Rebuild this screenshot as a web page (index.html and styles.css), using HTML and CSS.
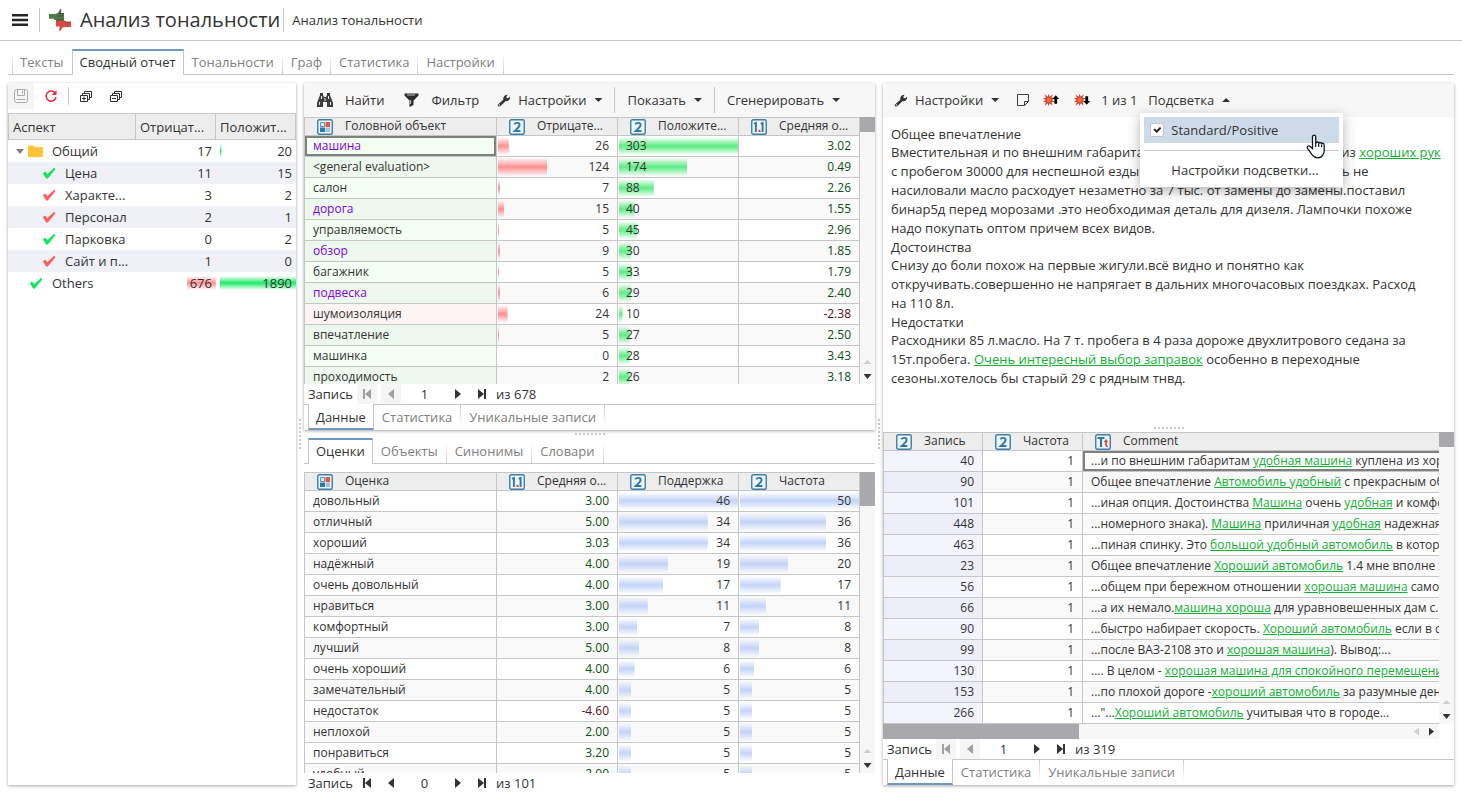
FILE: index.html
```html
<!DOCTYPE html>
<html lang="ru">
<head>
<meta charset="utf-8">
<title>Анализ тональности</title>
<link rel="stylesheet" href="styles.css">
</head>
<body>
<svg class="defs" aria-hidden="true">
  <symbol id="i-int" viewBox="0 0 16 16"><rect x=".75" y=".75" width="14.5" height="14.5" rx="1.5" fill="#eef4f8" stroke="#3c7fa8" stroke-width="1.4"/><path d="M5.200 5.300C6.500 3.500 10.600 3.200 10.600 6c0 2-2.600 3.700-4.900 6h5.700" fill="none" stroke="#2f77a5" stroke-width="1.900"/></symbol>
  <symbol id="i-real" viewBox="0 0 16 16"><rect x=".75" y=".75" width="14.5" height="14.5" rx="1.5" fill="#eef4f8" stroke="#3c7fa8" stroke-width="1.4"/><path d="M3 4.800 4.900 3.900V13M9.700 4.800l1.900-.9V13" fill="none" stroke="#2f77a5" stroke-width="1.900"/><path d="M7.500 10.800h2v2.200h-2z" fill="#e04438"/></symbol>
  <symbol id="i-cat" viewBox="0 0 16 16"><rect x=".75" y=".75" width="14.5" height="14.5" rx="1.5" fill="#eef4f8" stroke="#3c7fa8" stroke-width="1.4"/><path d="M3.500 3.500h4v4h-4z" fill="#dcebf5" stroke="#5b93b8"/><path d="M8.500 3H13v5H8.500z" fill="#e25549"/><path d="M3 8.500h5V13H3z" fill="#2f77a5"/><path d="M8.500 8.500H13V13H8.500z" fill="#a5c3d8"/></symbol>
  <symbol id="i-text" viewBox="0 0 16 16"><rect x=".75" y=".75" width="14.5" height="14.5" rx="1.5" fill="#eef4f8" stroke="#3c7fa8" stroke-width="1.4"/><path d="M2.500 4h7M6 4v9" fill="none" stroke="#2f77a5" stroke-width="2.200"/><path d="M11 5.500v6q0 1 1.800 1M9.200 7.500h3.600" fill="none" stroke="#e04438" stroke-width="1.600"/></symbol>
  <symbol id="i-wrench" viewBox="0 0 14 14"><path d="M1 11.400 6.300 6.700C5.800 4.200 7.600 1.600 10.600 1.700L9.300 3.700l.5 1.400 1.500.2L13 3.500c.6 2.800-1.700 5-4.300 4.600L3.500 13.100C2 14-.1 12.700 1 11.400z" fill="#333"/><circle cx="2.400" cy="11.900" r=".7" fill="#f7f7f7"/></symbol>
  <symbol id="i-check" viewBox="0 0 14 12"><path d="M.8 6.300 3.200 4.500 5.300 7.200 12.200.8 13.400 2.200 5.800 11.400 4.200 11.400z" fill="currentColor"/></symbol>
  <symbol id="i-first" viewBox="0 0 12 12"><path d="M2 1h2v10H2zM4 6l6-5v10z" fill="currentColor"/></symbol>
  <symbol id="i-prev" viewBox="0 0 12 12"><path d="M3 6l6-5v10z" fill="currentColor"/></symbol>
  <symbol id="i-next" viewBox="0 0 12 12"><path d="M9 6 3 1v10z" fill="currentColor"/></symbol>
  <symbol id="i-last" viewBox="0 0 12 12"><path d="M8 1h2v10H8zM8 6 2 1v10z" fill="currentColor"/></symbol>
  <symbol id="i-burst" viewBox="0 0 18 14"><path d="M6 0l1 3.500L10.500 1 9 4.500l3.500.5L9.500 7l3 2.500-3.500-.3 1.200 3.800L7 10.500 6 14l-1-3.500L1.800 13 3 9.200l-3 .3L2.600 7 0 4.800l3.200-.2L1.500 1 5 3.500z" fill="#c94a32"/><circle cx="6.200" cy="7" r="2.300" fill="#ff6a35"/></symbol>
</svg>

<header class="header">
  <button class="icon-btn burger" aria-label="Меню"><svg width="16" height="12"><path d="M0 0h16v2.500H0zM0 4.800h16v2.500H0zM0 9.500h16V12H0z" fill="#262626"/></svg></button>
  <svg class="logo" width="22" height="22" viewBox="0 0 22 22"><path d="M0 5h6l3-1 2-4 1.500.5L12 4h3v6.500L10.500 12 5 9.800H0z" fill="#4d7c4b"/><path d="M5 9.800 10.500 12 15 10.500" fill="none" stroke="#31522f"/><path d="M22 18h-6l-2.500.5-2 3.500-1.500-.5.800-4H7V12l4.500-1.500L17 13h5z" fill="#d9493f"/><path d="M7 12l4.500-1.500L17 13h5M9 4.500h6M8 7h6" fill="none" stroke="#4b4038" stroke-width=".8"/></svg>
  <h1 class="title">Анализ тональности</h1>
  <span class="crumb">Анализ тональности</span>
</header>

<nav class="tabs main-tabs">
  <button class="tab first">Тексты</button><button class="tab active">Сводный отчет</button><button class="tab">Тональности</button><button class="tab">Граф</button><button class="tab">Статистика</button><button class="tab">Настройки</button>
</nav>

<main class="workspace">
  <section class="panel aspects">
    <div class="aspect-tools">
      <button class="tool saved" aria-label="Сохранить"><svg width="14" height="14" viewBox="0 0 14 14" fill="none" stroke="#aaa"><rect x=".5" y=".5" width="13" height="13" rx="2"/><path d="M3.500.5v6h7v-6M8.500 2v2.500M2.500 10.500h9"/></svg></button>
      <button class="tool" aria-label="Обновить"><svg width="14" height="14" viewBox="0 0 14 14"><path d="M10.800 3.700A5 5 0 1 0 12 8.300" fill="none" stroke="#f5222d" stroke-width="1.500"/><path d="M12.500 1v5H7.800z" fill="#f5222d"/></svg></button>
      <span class="rule"></span>
      <button class="tool" aria-label="Развернуть все"><svg width="12" height="11" viewBox="0 0 12 11" fill="none" stroke="#333"><path d="M4.500 2V.5h7v6H10M2.500 4V2.500h7v6H8"/><path d="M.5 4.500h7v6h-7zM2 7.500h4M4 5.500v4"/></svg></button>
      <button class="tool" aria-label="Свернуть все"><svg width="12" height="11" viewBox="0 0 12 11" fill="none" stroke="#333"><path d="M4.500 2V.5h7v6H10M2.500 4V2.500h7v6H8"/><path d="M.5 4.500h7v6h-7zM2 7.500h4"/></svg></button>
    </div>
    <table class="tree">
      <colgroup><col><col class="c-neg"><col class="c-pos"></colgroup>
      <thead><tr><th>Аспект</th><th>Отрицат...</th><th>Положит...</th></tr></thead>
      <tbody>
        <tr><td class="root"><svg class="twist" width="8" height="5"><path d="M0 0h8L4 5z" fill="#808080"/></svg><svg class="folder" width="15" height="12"><path d="M0 1.500Q0 .5 1 .5h4.500L7 2h7q1 0 1 1v8q0 1-1 1H1q-1 0-1-1z" fill="#ffc436"/></svg>Общий</td><td>17</td><td class="tbar green" style="--v:2%">20</td></tr>
        <tr><td class="leaf"><svg class="ok" width="14" height="12"><use href="#i-check"/></svg>Цена</td><td>11</td><td>15</td></tr>
        <tr><td class="leaf"><svg class="bad" width="14" height="12"><use href="#i-check"/></svg>Характе...</td><td>3</td><td>2</td></tr>
        <tr><td class="leaf"><svg class="bad" width="14" height="12"><use href="#i-check"/></svg>Персонал</td><td>2</td><td>1</td></tr>
        <tr><td class="leaf"><svg class="ok" width="14" height="12"><use href="#i-check"/></svg>Парковка</td><td>0</td><td>2</td></tr>
        <tr><td class="leaf"><svg class="bad" width="14" height="12"><use href="#i-check"/></svg>Сайт и п...</td><td>1</td><td>0</td></tr>
        <tr><td class="other"><svg class="ok" width="14" height="12"><use href="#i-check"/></svg>Others</td><td class="tbar red" style="--v:36%">676</td><td class="tbar green" style="--v:100%">1890</td></tr>
      </tbody>
    </table>
  </section>

  <div class="split-v"><i class="grip"></i></div>

  <div class="middle">
    <section class="panel objects">
      <div class="toolbar">
        <button class="cmd wide"><svg width="16" height="14" viewBox="0 0 16 14"><path d="M3 0h3v2l1 2h2l1-2V0h3v2l3 8v4h-6V9H6v5H0v-4l3-8z" fill="#3c3c3c"/><path d="M4.500 3v3M11.500 3v3M2.500 9v3M13.500 9v3M8 5v3" stroke="#eee"/></svg>Найти</button>
        <button class="cmd wide"><svg width="15" height="14" viewBox="0 0 15 14"><path d="M.5.500h14v2L9.500 7.500V12l-4 2V7.500L.5 2.500z" fill="#2b2b2b"/><path d="M3 2h8M6.500 7v4" stroke="#bbb" stroke-width="1.200"/></svg>Фильтр</button>
        <button class="cmd"><svg width="14" height="14"><use href="#i-wrench"/></svg>Настройки<i class="caret"></i></button>
        <span class="rule"></span>
        <button class="cmd">Показать<i class="caret"></i></button>
        <span class="rule"></span>
        <button class="cmd">Сгенерировать<i class="caret"></i></button>
      </div>
      <div class="grid-area">
        <div class="grid-clip">
        <table class="grid heads">
          <colgroup><col><col class="c-num"><col class="c-num"><col class="c-num"></colgroup>
          <thead><tr><th><div><svg><use href="#i-cat"/></svg><span>Головной объект</span></div></th><th><div><svg><use href="#i-int"/></svg><span>Отрицате...</span></div></th><th><div><svg><use href="#i-int"/></svg><span>Положите...</span></div></th><th><div><svg><use href="#i-real"/></svg><span>Средняя о...</span></div></th></tr></thead>
          <tbody>
            <tr><td class="picked"><a href="#">машина</a></td><td class="bar red" style="--v:9%">26</td><td class="bar green" style="--v:100%">303</td><td class="up">3.02</td></tr>
            <tr><td>&lt;general evaluation&gt;</td><td class="bar red" style="--v:41%">124</td><td class="bar green" style="--v:57%">174</td><td class="up">0.49</td></tr>
            <tr><td>салон</td><td class="bar red" style="--v:2%">7</td><td class="bar green" style="--v:29%">88</td><td class="up">2.26</td></tr>
            <tr><td><a href="#">дорога</a></td><td class="bar red" style="--v:5%">15</td><td class="bar green" style="--v:13%">40</td><td class="up">1.55</td></tr>
            <tr><td>управляемость</td><td class="bar red" style="--v:1%">5</td><td class="bar green" style="--v:15%">45</td><td class="up">2.96</td></tr>
            <tr><td><a href="#">обзор</a></td><td class="bar red" style="--v:2%">9</td><td class="bar green" style="--v:10%">30</td><td class="up">1.85</td></tr>
            <tr><td>багажник</td><td class="bar red" style="--v:1%">5</td><td class="bar green" style="--v:11%">33</td><td class="up">1.79</td></tr>
            <tr><td><a href="#">подвеска</a></td><td class="bar red" style="--v:2%">6</td><td class="bar green" style="--v:10%">29</td><td class="up">2.40</td></tr>
            <tr><td class="negative">шумоизоляция</td><td class="bar red" style="--v:8%">24</td><td class="bar green" style="--v:3%">10</td><td class="down">-2.38</td></tr>
            <tr><td>впечатление</td><td class="bar red" style="--v:1%">5</td><td class="bar green" style="--v:9%">27</td><td class="up">2.50</td></tr>
            <tr><td>машинка</td><td>0</td><td class="bar green" style="--v:9%">28</td><td class="up">3.43</td></tr>
            <tr><td>проходимость</td><td>2</td><td class="bar green" style="--v:9%">26</td><td class="up">3.18</td></tr>
          </tbody>
        </table>
        </div>
        <div class="vscroll"><i class="thumb small"></i><i class="arr up-off"></i><i class="arr dn"></i></div>
      </div>
      <div class="pager">
        <label for="p1">Запись</label>
        <button disabled aria-label="В начало"><svg><use href="#i-first"/></svg></button><button disabled aria-label="Назад"><svg><use href="#i-prev"/></svg></button>
        <input id="p1" type="text" value="1">
        <button aria-label="Вперед"><svg><use href="#i-next"/></svg></button><button aria-label="В конец"><svg><use href="#i-last"/></svg></button>
        <span>из 678</span>
      </div>
      <nav class="tabs under"><button class="tab active">Данные</button><button class="tab">Статистика</button><button class="tab">Уникальные записи</button></nav>
    </section>

    <div class="split-h"><i class="grip"></i></div>

    <section class="ratings">
      <nav class="tabs"><button class="tab active">Оценки</button><button class="tab">Объекты</button><button class="tab">Синонимы</button><button class="tab">Словари</button></nav>
      <div class="grid-area">
        <div class="grid-clip">
        <table class="grid">
          <colgroup><col><col class="c-num"><col class="c-num"><col class="c-num"></colgroup>
          <thead><tr><th><div><svg><use href="#i-cat"/></svg><span>Оценка</span></div></th><th><div><svg><use href="#i-real"/></svg><span>Средняя о...</span></div></th><th><div><svg><use href="#i-int"/></svg><span>Поддержка</span></div></th><th><div><svg><use href="#i-int"/></svg><span>Частота</span></div></th></tr></thead>
          <tbody>
            <tr><td>довольный</td><td class="up">3.00</td><td class="bar blue" style="--v:100%">46</td><td class="bar blue" style="--v:100%">50</td></tr>
            <tr><td>отличный</td><td class="up">5.00</td><td class="bar blue" style="--v:74%">34</td><td class="bar blue" style="--v:72%">36</td></tr>
            <tr><td>хороший</td><td class="up">3.03</td><td class="bar blue" style="--v:74%">34</td><td class="bar blue" style="--v:72%">36</td></tr>
            <tr><td>надёжный</td><td class="up">4.00</td><td class="bar blue" style="--v:41%">19</td><td class="bar blue" style="--v:40%">20</td></tr>
            <tr><td>очень довольный</td><td class="up">4.00</td><td class="bar blue" style="--v:37%">17</td><td class="bar blue" style="--v:34%">17</td></tr>
            <tr><td>нравиться</td><td class="up">3.00</td><td class="bar blue" style="--v:24%">11</td><td class="bar blue" style="--v:22%">11</td></tr>
            <tr><td>комфортный</td><td class="up">3.00</td><td class="bar blue" style="--v:15%">7</td><td class="bar blue" style="--v:16%">8</td></tr>
            <tr><td>лучший</td><td class="up">5.00</td><td class="bar blue" style="--v:17%">8</td><td class="bar blue" style="--v:16%">8</td></tr>
            <tr><td>очень хороший</td><td class="up">4.00</td><td class="bar blue" style="--v:13%">6</td><td class="bar blue" style="--v:12%">6</td></tr>
            <tr><td>замечательный</td><td class="up">4.00</td><td class="bar blue" style="--v:10%">5</td><td class="bar blue" style="--v:10%">5</td></tr>
            <tr><td>недостаток</td><td class="down">-4.60</td><td class="bar blue" style="--v:10%">5</td><td class="bar blue" style="--v:10%">5</td></tr>
            <tr><td>неплохой</td><td class="up">2.00</td><td class="bar blue" style="--v:10%">5</td><td class="bar blue" style="--v:10%">5</td></tr>
            <tr><td>понравиться</td><td class="up">3.20</td><td class="bar blue" style="--v:10%">5</td><td class="bar blue" style="--v:10%">5</td></tr>
            <tr><td>удобный</td><td class="up">2.00</td><td class="bar blue" style="--v:10%">5</td><td class="bar blue" style="--v:10%">5</td></tr>
          </tbody>
        </table>
        </div>
        <div class="vscroll"><i class="thumb tall"></i><i class="arr up-off"></i><i class="arr dn"></i></div>
      </div>
      <div class="pager">
        <label for="p2">Запись</label>
        <button aria-label="В начало"><svg><use href="#i-first"/></svg></button><button aria-label="Назад"><svg><use href="#i-prev"/></svg></button>
        <input id="p2" type="text" value="0">
        <button aria-label="Вперед"><svg><use href="#i-next"/></svg></button><button aria-label="В конец"><svg><use href="#i-last"/></svg></button>
        <span>из 101</span>
      </div>
    </section>
  </div>

  <div class="split-v"><i class="grip"></i></div>

  <section class="panel texts">
    <div class="review">
      <div class="toolbar">
        <button class="cmd"><svg width="14" height="14"><use href="#i-wrench"/></svg>Настройки<i class="caret"></i></button>
        <button class="icon-btn note" aria-label="Заметка"><svg width="12" height="12" viewBox="0 0 12 12" fill="none" stroke="#3c3c3c"><path d="M.5.500h11v7l-4 4h-7zM11.500 7.500h-4v4"/></svg></button>
        <button class="icon-btn" aria-label="Предыдущее"><svg width="17" height="14" viewBox="0 0 18 14"><use href="#i-burst" width="18" height="14"/><path d="M13.500 2l3.500 4h-2v5h-3V6h-2z"/></svg></button>
        <button class="icon-btn" aria-label="Следующее"><svg width="17" height="14" viewBox="0 0 18 14"><use href="#i-burst" width="18" height="14"/><path d="M13.500 12l3.500-4h-2V3h-3v5h-2z"/></svg></button>
        <span class="count">1 из 1</span>
        <div class="dropdown">
          <button class="cmd">Подсветка<i class="caret open"></i></button>
          <div class="menu">
            <label class="menu-item hover"><input type="checkbox" checked>Standard/Positive</label>
            <hr>
            <button class="menu-item">Настройки подсветки...</button>
            <svg class="pointer" width="20" height="25" viewBox="0 0 20 25"><path d="M6.500 14.500V3q0-1.800 1.600-1.800T9.700 3v6.500q0-1.500 1.500-1.500t1.500 1.700q0-1.200 1.400-1.200t1.500 1.700q0-1 1.200-1T18.200 11v5.500q0 3-1.500 4.500-1.300 2.800-5.200 2.800-3.500 0-5.500-3.300L1.500 14.300q-.8-1.600.6-2.300 1.200-.4 2.400.8z" fill="#fff" stroke="#111827" stroke-width="1.300"/><path d="M9.700 9v4M12.700 9.700V13M15.600 10.500V13" stroke="#111827" stroke-width="1.200"/></svg>
          </div>
        </div>
      </div>
      <article class="body">
        <h2>Общее впечатление</h2>
        <p>Вместительная и по внешним габаритам удобная машина куплена не из <a href="#">хороших рук</a><br>с пробегом 30000 для неспешной езды .Надеюсь прежний хозяин здесь не<br>насиловали масло расходует незаметно за 7 тыс. от замены до замены.поставил<br>бинар5д перед морозами .это необходимая деталь для дизеля. Лампочки похоже<br>надо покупать оптом причем всех видов.</p>
        <h2>Достоинства</h2>
        <p>Снизу до боли похож на первые жигули.всё видно и понятно как<br>откручивать.совершенно не напрягает в дальних многочасовых поездках. Расход<br>на 110 8л.</p>
        <h2>Недостатки</h2>
        <p>Расходники 85 л.масло. На 7 т. пробега в 4 раза дороже двухлитрового седана за<br>15т.пробега. <a href="#">Очень интересный выбор заправок</a> особенно в переходные<br>сезоны.хотелось бы старый 29 с рядным тнвд.</p>
      </article>
    </div>
    <div class="split-h"><i class="grip"></i></div>
    <div class="records">
      <div class="grid-area">
        <div class="grid-clip">
        <table class="grid comments">
          <colgroup><col class="c-rec"><col class="c-rec"><col></colgroup>
          <thead><tr><th><div><svg><use href="#i-int"/></svg><span>Запись</span></div></th><th><div><svg><use href="#i-int"/></svg><span>Частота</span></div></th><th><div><svg><use href="#i-text"/></svg><span>Comment</span></div></th></tr></thead>
          <tbody>
            <tr><td>40</td><td>1</td><td class="picked">...и по внешним габаритам <a href="#">удобная машина</a> куплена из хороших рук</td></tr>
            <tr><td>90</td><td>1</td><td>Общее впечатление <a href="#">Автомобиль удобный</a> с прекрасным обзором</td></tr>
            <tr><td>101</td><td>1</td><td>...иная опция. Достоинства <a href="#">Машина</a> очень <a href="#">удобная</a> и комфортная</td></tr>
            <tr><td>448</td><td>1</td><td>...номерного знака). <a href="#">Машина</a> приличная <a href="#">удобная</a> надежная</td></tr>
            <tr><td>463</td><td>1</td><td>...пиная спинку. Это <a href="#">большой удобный автомобиль</a> в котором</td></tr>
            <tr><td>23</td><td>1</td><td>Общее впечатление <a href="#">Хороший автомобиль</a> 1.4 мне вполне хватает</td></tr>
            <tr><td>56</td><td>1</td><td>...общем при бережном отношении <a href="#">хорошая машина</a> самое то</td></tr>
            <tr><td>66</td><td>1</td><td>...а их немало.<a href="#">машина хороша</a> для уравновешенных дам с...</td></tr>
            <tr><td>90</td><td>1</td><td>...быстро набирает скорость. <a href="#">Хороший автомобиль</a> если в семье</td></tr>
            <tr><td>99</td><td>1</td><td>...после ВАЗ-2108 это и <a href="#">хорошая машина</a>). Вывод:...</td></tr>
            <tr><td>130</td><td>1</td><td>.... В целом - <a href="#">хорошая машина для спокойного перемещения</a></td></tr>
            <tr><td>153</td><td>1</td><td>...по плохой дороге -<a href="#">хороший автомобиль</a> за разумные деньги</td></tr>
            <tr><td>266</td><td>1</td><td>..."...<a href="#">Хороший автомобиль</a> учитывая что в городе...</td></tr>
          </tbody>
        </table>
        </div>
        <div class="vscroll"><i class="thumb small"></i><i class="arr up-off"></i><i class="arr dn"></i></div>
      </div>
      <div class="hscroll"><i class="hthumb"></i><i class="arr lf"></i><i class="arr rt"></i></div>
      <div class="pager">
        <label for="p3">Запись</label>
        <button disabled aria-label="В начало"><svg><use href="#i-first"/></svg></button><button disabled aria-label="Назад"><svg><use href="#i-prev"/></svg></button>
        <input id="p3" type="text" value="1">
        <button aria-label="Вперед"><svg><use href="#i-next"/></svg></button><button aria-label="В конец"><svg><use href="#i-last"/></svg></button>
        <span>из 319</span>
      </div>
      <nav class="tabs under"><button class="tab active">Данные</button><button class="tab">Статистика</button><button class="tab">Уникальные записи</button></nav>
    </div>
  </section>
</main>
</body>
</html>
```
FILE: styles.css
```css
* { box-sizing: border-box; }

:root {
  --line: #c6c6c6;
  --accent: #7096c4;
  --text: #333;
  --muted: #808080;
}

body {
  margin: 0;
  height: 100vh;
  overflow: hidden;
  display: flex;
  flex-direction: column;
  background: #fff;
  color: var(--text);
  font: 13px/20px "Open Sans", sans-serif;
}

button, input { font: inherit; color: inherit; }
button { border: 0; padding: 0; background: none; white-space: nowrap; }
h1, h2, p { margin: 0; font-weight: 400; }
svg { flex: none; }
.defs { position: absolute; width: 0; height: 0; }

/* Header */
.header {
  display: flex;
  align-items: center;
  height: 41px;
  padding-left: 12px;
  border-bottom: 1px solid var(--line);
}
.icon-btn { display: flex; align-items: center; }
.burger { padding-right: 11px; height: 24px; border-right: 1px solid var(--line); }
.logo { margin: 0 9px; }
.title {
  padding-right: 3px;
  border-right: 1px solid var(--line);
  font-size: 20px;
  line-height: 24px;
}
.crumb { padding-left: 8px; }

/* Tabs */
.tabs { display: flex; flex: none; height: 26px; padding-left: 4px; box-shadow: inset 0 -1px var(--line); }
.main-tabs { margin: 8px; }
.tab {
  padding: 0 8px;
  color: var(--muted);
  border-right: 1px solid;
  border-image: linear-gradient(transparent 20%, var(--line)) 1;
}
.tab.first { border-left: 1px solid; padding-left: 7px; }
.tab.active {
  color: var(--text);
  background: #fff;
  border: 1px solid var(--line);
  border-width: 2px 1px 0;
  border-top-color: var(--accent);
  border-image: none;
  padding: 0 7px 2px;
}
.tab.active:not(:first-child) { margin-left: -1px; }
.tabs.under { box-shadow: inset 0 1px var(--line); }
.under .tab { border-image: linear-gradient(var(--line), transparent 80%) 1; }
.under .tab.active {
  border-width: 0 1px 2px;
  border-color: var(--line);
  border-bottom-color: var(--accent);
  border-image: none;
  padding: 2px 7px 0;
}

/* Workspace */
.workspace {
  flex: 1;
  min-height: 0;
  display: grid;
  grid-template-columns: 288px 8px minmax(0, 1fr) 8px minmax(0, 1fr);
  padding: 0 8px;
}
.panel { background: #fff; box-shadow: 0 1px 3px rgba(0, 0, 0, .35); }
.aspects, .texts { margin-bottom: 8px; }
.middle { display: grid; grid-template-rows: minmax(0, 347fr) 8px minmax(0, 355fr); min-height: 0; }
.objects, .ratings, .records { display: flex; flex-direction: column; min-height: 0; }
.texts { display: grid; grid-template-rows: minmax(0, 341fr) 8px minmax(0, 353fr); min-height: 0; }

.split-v, .split-h { display: flex; align-items: center; justify-content: center; }
.grip { width: 30px; height: 2px; background: repeating-linear-gradient(90deg, #c8c8c8 0 2px, transparent 2px 4px); }
.split-v .grip { width: 2px; height: 30px; background: repeating-linear-gradient(#c8c8c8 0 2px, transparent 2px 4px); }
.split-v { padding-bottom: 8px; }

/* Toolbars */
.toolbar { display: flex; align-items: center; height: 34px; flex: none; background: #f7f7f7; padding-left: 3px; }
.cmd { display: flex; align-items: center; height: 26px; padding: 0 8px; gap: 7px; }
.cmd.wide { gap: 12px; padding: 0 10px; }
.caret { width: 8px; height: 4px; margin-left: 1px; background: #333; clip-path: polygon(0 0, 100% 0, 50% 100%); }
.caret.open { clip-path: polygon(0 100%, 100% 100%, 50% 0); }
.rule { width: 1px; height: 26px; background: var(--line); margin: 0 4px; }
.texts .icon-btn { height: 26px; padding: 0 7px; }
.texts .note { margin-left: 3px; }
.count { padding: 0 3px; }

.aspect-tools { display: flex; align-items: center; height: 26px; margin-bottom: 4px; gap: 4px; }
.tool { display: flex; align-items: center; justify-content: center; width: 26px; height: 26px; }
.tool.saved { background: #f5f5f5; }
.aspect-tools .rule { height: 18px; margin: 0; }

/* Aspect tree */
.tree { width: 100%; table-layout: fixed; border-spacing: 0; }
.c-neg, .c-pos { width: 80px; }
.tree th {
  height: 27px;
  padding: 0 4px;
  text-align: left;
  font-weight: 400;
  background: #ededed;
  border: 1px solid var(--line);
  border-left-width: 0;
  white-space: nowrap;
}
.tree th:first-child { border-left-width: 1px; }
.tree td { height: 22px; padding: 0 4px; text-align: right; white-space: nowrap; }
.tree tbody tr:nth-child(even) { background: #f0f0f7; }
.tree td:first-child { text-align: left; }
.tree td svg { vertical-align: -1px; margin-right: 9px; }
.tree td .twist { margin-right: 4px; vertical-align: 2px; }
.tree td.root { padding-left: 8px; }
.tree td.leaf { padding-left: 34px; }
.tree td.other { padding-left: 21px; }
.ok { color: #0de85c; }
.bad { color: #ff5c5c; }
.tbar { background: linear-gradient(transparent, var(--c), transparent) right / var(--v) 14px no-repeat; }
.tbar.green { background-position: left; border-left: 4px solid transparent; }

/* Data grids */
.grid-area { flex: 1; min-height: 0; display: flex; }
.grid-clip { flex: 1; min-width: 0; overflow: hidden; }
.grid { width: 100%; table-layout: fixed; border-spacing: 0; font-size: 12px; }
.c-num { width: 121px; }
.c-rec { width: 100px; }
.grid th {
  height: 19px;
  padding: 0;
  font-weight: 400;
  background: #ededed;
  border: 1px solid var(--line);
  border-left-width: 0;
}
.grid th div { display: flex; align-items: flex-start; gap: 12px; height: 17px; padding: 0 12px; line-height: 16px; }
.grid th svg { width: 16px; height: 16px; align-self: flex-end; }
.grid th span { white-space: nowrap; }
.grid td {
  height: 21px;
  padding: 0 8px;
  line-height: 20px;
  text-align: right;
  white-space: nowrap;
  overflow: hidden;
  border: solid var(--line);
  border-width: 0 1px 1px 0;
}
.grid th:first-child { border-left-width: 1px; }
.grid td:first-child { border-left-width: 1px; text-align: left; }
.grid tbody tr:nth-child(even) { background: #f9f9f9; }
.bar { background: linear-gradient(transparent, var(--c) 50%, transparent) 1px 50% / var(--v) 18px no-repeat; }
.red { --c: #ff8f8f; }
.green { --c: #5cec80; }
.tree .green { --c: #1ee868; }
.blue { --c: #c3d3f8; }
.grid td.green { text-align: left; }
.up { color: #0b4f12; }
.down { color: #5c0a20; }
.heads td:first-child { background: #f4fff4; }
.heads tr:nth-child(even) td:first-child { background: #edf8ee; }
.heads tr td.negative:first-child { background: #fff4f4; }
.heads a { color: #8400e6; text-decoration: none; }
.grid .picked { box-shadow: inset 0 0 0 2px #808080; }

.comments td:first-child { text-align: right; background: #f4f4ff; }
.comments tr:nth-child(even) td:first-child { background: #eeeef8; }
.comments td:last-child { text-align: left; border-right: 0; }
.comments th:last-child { border-right: 0; }
.comments .picked { box-shadow: inset 2px 0 #808080, inset 0 2px #808080, inset 0 -2px #808080; }
.comments a, .body a { color: #12b036; }

/* Scroll bars */
.vscroll { width: 15px; background: #f7f7f7; display: flex; flex-direction: column; align-items: center; padding-bottom: 5px; }
.thumb { width: 15px; background: #a9a9ad; margin-bottom: auto; }
.small { height: 15px; }
.tall { height: 34px; }
.arr { width: 8px; height: 4px; background: #333; flex: none; }
.up-off { background: #d0d0d0; clip-path: polygon(0 100%, 100% 100%, 50% 0); margin-bottom: 10px; }
.dn { height: 5px; clip-path: polygon(0 0, 100% 0, 50% 100%); }
.hscroll { display: flex; align-items: center; flex: none; height: 15px; margin-right: 15px; padding-right: 5px; background: #f7f7f7; }
.hthumb { width: 196px; height: 15px; background: #a9a9ad; margin-right: auto; }
.lf, .rt { width: 5px; height: 8px; }
.lf { background: #d0d0d0; clip-path: polygon(100% 0, 100% 100%, 0 50%); margin-right: 10px; }
.rt { clip-path: polygon(0 0, 0 100%, 100% 50%); }

/* Pager */
.pager { display: flex; flex: none; height: 20px; gap: 4px; padding-left: 4px; }
.pager button { display: flex; align-items: center; justify-content: center; width: 20px; }
.pager button:disabled { background: #f5f5f5; color: #a0a0a0; }
.pager svg { width: 12px; height: 12px; }
.pager input { width: 39px; padding: 0; border: 0; background: none; text-align: center; }

.ratings .grid-area { margin-top: 8px; }

/* Review text */
.body { padding: 8px; }
.body h2 { font-size: 13px; line-height: 18px; }
.body p { line-height: 19px; white-space: nowrap; }

/* Highlight menu */
.dropdown { position: relative; }
.menu {
  position: absolute;
  z-index: 2;
  top: 100%;
  left: 0;
  width: 203px;
  padding: 4px;
  background: #fff;
  box-shadow: 0 4px 12px rgba(0, 0, 0, .3);
}
.menu-item { display: flex; align-items: center; width: 100%; height: 26px; padding-left: 27px; }
.menu-item.hover { padding-left: 6px; gap: 7px; background: #cddbe9; }
.menu hr { margin: 7px 0 6px; border: 0; border-top: 1px solid var(--line); }
.menu input {
  appearance: none;
  width: 14px;
  height: 14px;
  margin: 0;
  border: 1px solid #c4c4c4;
  border-radius: 2px;
  background: #fff;
  display: grid;
  place-items: center;
}
.menu input:checked::before {
  content: "";
  width: 8px;
  height: 6px;
  background: #222;
  clip-path: polygon(0 45%, 20% 25%, 40% 55%, 82% 0, 100% 20%, 42% 100%);
}
.pointer { position: absolute; right: 17px; top: 21px; }
```
